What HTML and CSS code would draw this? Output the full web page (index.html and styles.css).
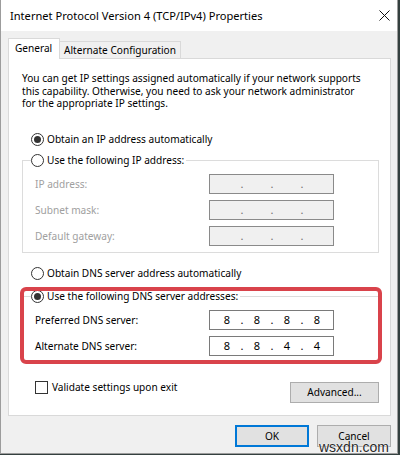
FILE: index.html
```html
<!DOCTYPE html>
<html>
<head>
<meta charset="utf-8">
<title>Internet Protocol Version 4 (TCP/IPv4) Properties</title>
<link rel="stylesheet" href="styles.css">
</head>
<body>
<div class="window">
  <div class="titlebar">
    <span class="title">Internet Protocol Version 4 (TCP/IPv4) Properties</span>
    <svg class="close" width="11" height="11" viewBox="0 0 11 11"><path d="M0.5 0.5 L10.5 10.5 M10.5 0.5 L0.5 10.5" stroke="#111" stroke-width="1" fill="none"/></svg>
  </div>
  <div class="client">
    <div class="tabs">
      <div class="tab active">General</div>
      <div class="tab">Alternate Configuration</div>
    </div>
    <div class="panel">
      <p class="intro">You can get IP settings assigned automatically if your network supports<br>this capability. Otherwise, you need to ask your network administrator<br>for the appropriate IP settings.</p>

      <div class="option first"><span class="radio checked"></span><span class="opt-text">Obtain an IP address automatically</span></div>

      <fieldset class="group">
        <legend><span class="radio"></span><span class="opt-text">Use the following IP address:</span></legend>
        <div class="field disabled">
          <span class="label">IP address:</span>
          <span class="ipbox"><span class="oct"></span><span class="dot">.</span><span class="oct"></span><span class="dot">.</span><span class="oct"></span><span class="dot">.</span><span class="oct"></span></span>
        </div>
        <div class="field disabled">
          <span class="label">Subnet mask:</span>
          <span class="ipbox"><span class="oct"></span><span class="dot">.</span><span class="oct"></span><span class="dot">.</span><span class="oct"></span><span class="dot">.</span><span class="oct"></span></span>
        </div>
        <div class="field disabled">
          <span class="label">Default gateway:</span>
          <span class="ipbox"><span class="oct"></span><span class="dot">.</span><span class="oct"></span><span class="dot">.</span><span class="oct"></span><span class="dot">.</span><span class="oct"></span></span>
        </div>
      </fieldset>

      <div class="option second"><span class="radio"></span><span class="opt-text">Obtain DNS server address automatically</span></div>

      <div class="dns-wrap">
        <fieldset class="group dns">
          <legend><span class="radio checked"></span><span class="opt-text">Use the following DNS server addresses:</span></legend>
          <div class="field">
            <span class="label">Preferred DNS server:</span>
            <span class="ipbox"><span class="oct">8</span><span class="dot">.</span><span class="oct">8</span><span class="dot">.</span><span class="oct">8</span><span class="dot">.</span><span class="oct">8</span></span>
          </div>
          <div class="field">
            <span class="label">Alternate DNS server:</span>
            <span class="ipbox"><span class="oct">8</span><span class="dot">.</span><span class="oct">8</span><span class="dot">.</span><span class="oct">4</span><span class="dot">.</span><span class="oct">4</span></span>
          </div>
        </fieldset>
        <div class="highlight"></div>
      </div>

      <div class="bottom-row">
        <div class="check-row"><span class="checkbox"></span><span class="opt-text">Validate settings upon exit</span></div>
        <button class="btn advanced">Advanced...</button>
      </div>
    </div>
    <div class="footer">
      <button class="btn default">OK</button>
      <button class="btn">Cancel</button>
    </div>
  </div>
  <div class="watermark">wsxdn.com</div>
</div>
</body>
</html>
```

FILE: styles.css
```css
* { box-sizing: border-box; }

html, body {
  margin: 0;
  padding: 0;
  background: #34403f;
}

body {
  width: 400px;
  height: 455px;
  overflow: hidden;
  font-family: "Noto Sans", "Open Sans", sans-serif;
  font-size: 10.1px;
  color: #000;
}

.window {
  position: relative;
  width: 398px;
  height: 454px;
  background: #f0f0f0;
  border: 1px solid #9c9c9c;
  border-top: none;
  display: flex;
  flex-direction: column;
}

.titlebar {
  height: 31px;
  flex: none;
  background: #fff;
  display: flex;
  align-items: center;
  justify-content: space-between;
  padding: 0 7px 0 9px;
}

.title {
  font-size: 11.1px;
  color: #000;
}

.close { display: block; }

.client {
  padding: 7px 6px 0 7px;
  display: flex;
  flex-direction: column;
}

.tabs {
  display: flex;
  align-items: flex-end;
  height: 20px;
}

.tab {
  border: 1px solid #d9d9d9;
  border-bottom: none;
  background: #f0f0f0;
  height: 17px;
  line-height: 16px;
  width: 122px;
  margin-left: -1px;
  padding-left: 4px;
  white-space: nowrap;
}

.tab.active {
  position: relative;
  z-index: 1;
  background: #fff;
  height: 21px;
  line-height: 18px;
  width: 52px;
  margin-left: 0;
  margin-bottom: -1px;
  padding-left: 6px;
}

.panel {
  background: #fff;
  border: 1px solid #d9d9d9;
  padding: 13px 11px 12px 13px;
}

.intro {
  margin: 0;
  line-height: 12.5px;
  white-space: nowrap;
}

.option {
  display: flex;
  align-items: center;
  height: 13px;
  margin-left: 9px;
}

.option.first { margin-top: 23px; }
.option.second { margin-top: 14px; }

.opt-text {
  margin-left: 3px;
  white-space: nowrap;
  line-height: 13px;
}

.radio {
  flex: none;
  width: 13px;
  height: 13px;
  border: 1px solid #333;
  border-radius: 50%;
  background: #fff;
  display: grid;
  place-items: center;
}

.radio.checked::after {
  content: "";
  width: 7px;
  height: 7px;
  border-radius: 50%;
  background: #333;
}

.group {
  margin: 8px 0 0 0;
  padding: 0 0 6px 8px;
  border: 1px solid #dcdcdc;
  min-width: 0;
}

.group legend {
  display: flex;
  align-items: center;
  height: 13px;
  padding: 0 2px 0 0;
  background: #fff;
}

.field {
  display: flex;
  align-items: center;
  margin-left: 4px;
  margin-top: 6px;
  height: 20px;
}

.group legend + .field { margin-top: 7px; }

.label {
  width: 174px;
  flex: none;
  white-space: nowrap;
}

.field.disabled .label { color: #a0a0a0; }

.ipbox {
  display: flex;
  width: 125px;
  height: 20px;
  border: 1px solid #7a7a7a;
  background: #fff;
  padding-left: 5px;
  font-size: 11px;
  line-height: 18px;
}

.field.disabled .ipbox {
  background: #f0f0f0;
  border-color: #8a8a8a;
  color: #707070;
}

.oct {
  width: 24px;
  text-align: center;
}

.dot {
  width: 6px;
  text-align: center;
}

.dns-wrap {
  position: relative;
  margin-top: 10px;
}

.dns-wrap .group { margin-top: 0; }

.highlight {
  position: absolute;
  left: -2px;
  right: -3px;
  top: -3px;
  bottom: -1px;
  border: 4px solid #d9434b;
  border-radius: 6px;
  pointer-events: none;
}

.bottom-row {
  display: flex;
  justify-content: space-between;
  align-items: flex-start;
  margin-top: 18px;
}

.check-row {
  display: flex;
  align-items: center;
  margin-left: 13px;
  height: 13px;
}

.checkbox {
  flex: none;
  width: 13px;
  height: 13px;
  border: 1px solid #333;
  background: #fff;
}

.check-row .opt-text { margin-left: 4px; }

.btn {
  font-family: inherit;
  font-size: 10.1px;
  color: #000;
  background: #e1e1e1;
  border: 1px solid #adadad;
  border-radius: 0;
  height: 22px;
  width: 74px;
  padding: 0;
}

.btn.advanced {
  width: 89px;
  height: 21px;
  margin-top: 1px;
}

.btn.default {
  border: 2px solid #0078d7;
}

.footer {
  display: flex;
  justify-content: flex-end;
  gap: 8px;
  margin-top: 9px;
  padding-right: 0;
}

.watermark {
  position: absolute;
  left: 318px;
  top: 439px;
  font-family: "Liberation Sans", Arial, sans-serif;
  font-size: 14px;
  color: #2a2a2a;
  text-shadow: 0 0 2px #fff, 0 0 1px #fff;
  white-space: nowrap;
}
```
